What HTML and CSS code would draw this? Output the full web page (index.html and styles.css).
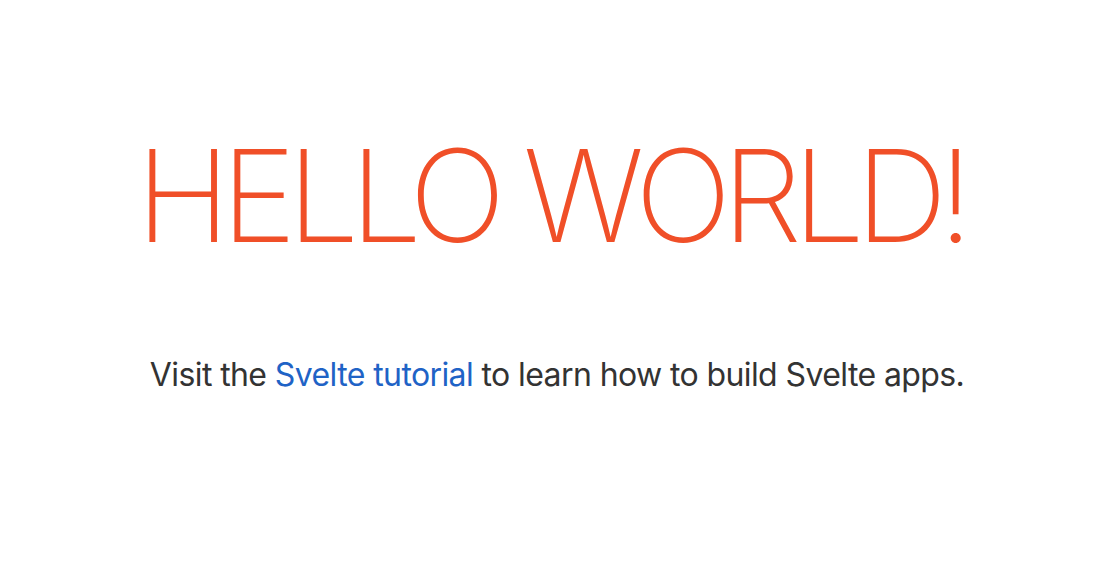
FILE: index.html
```html
<!DOCTYPE html>
<html lang="en">
<head>
<meta charset="utf-8">
<title>Svelte app</title>
<link rel="stylesheet" href="styles.css">
</head>
<body>
<main class="main">
  <h1 class="title">Hello world!</h1>
  <p class="intro">Visit the <a class="link" href="#">Svelte tutorial</a> to learn how to build Svelte apps.</p>
</main>
</body>
</html>
```
FILE: styles.css
```css
html, body {
  width: 100%;
  height: 100%;
}
body {
  margin: 0;
  padding: 16px;
  box-sizing: border-box;
  background: #ffffff;
  color: #333333;
  font-family: Inter, "Noto Sans", sans-serif;
}
.main {
  text-align: center;
  padding: 32px;
  margin: 0 auto;
}
.title {
  color: #f04f28;
  text-transform: uppercase;
  font-size: 128px;
  font-weight: 150;
  letter-spacing: -9.3px;
  line-height: 1.2;
  margin: 71px 0 78px 0;
  padding-right: 14px;
}
.intro {
  font-size: 32px;
  letter-spacing: -0.6px;
  line-height: 1.5;
  margin: 0;
}
.link {
  color: #1f63c6;
  text-decoration: none;
}
```
